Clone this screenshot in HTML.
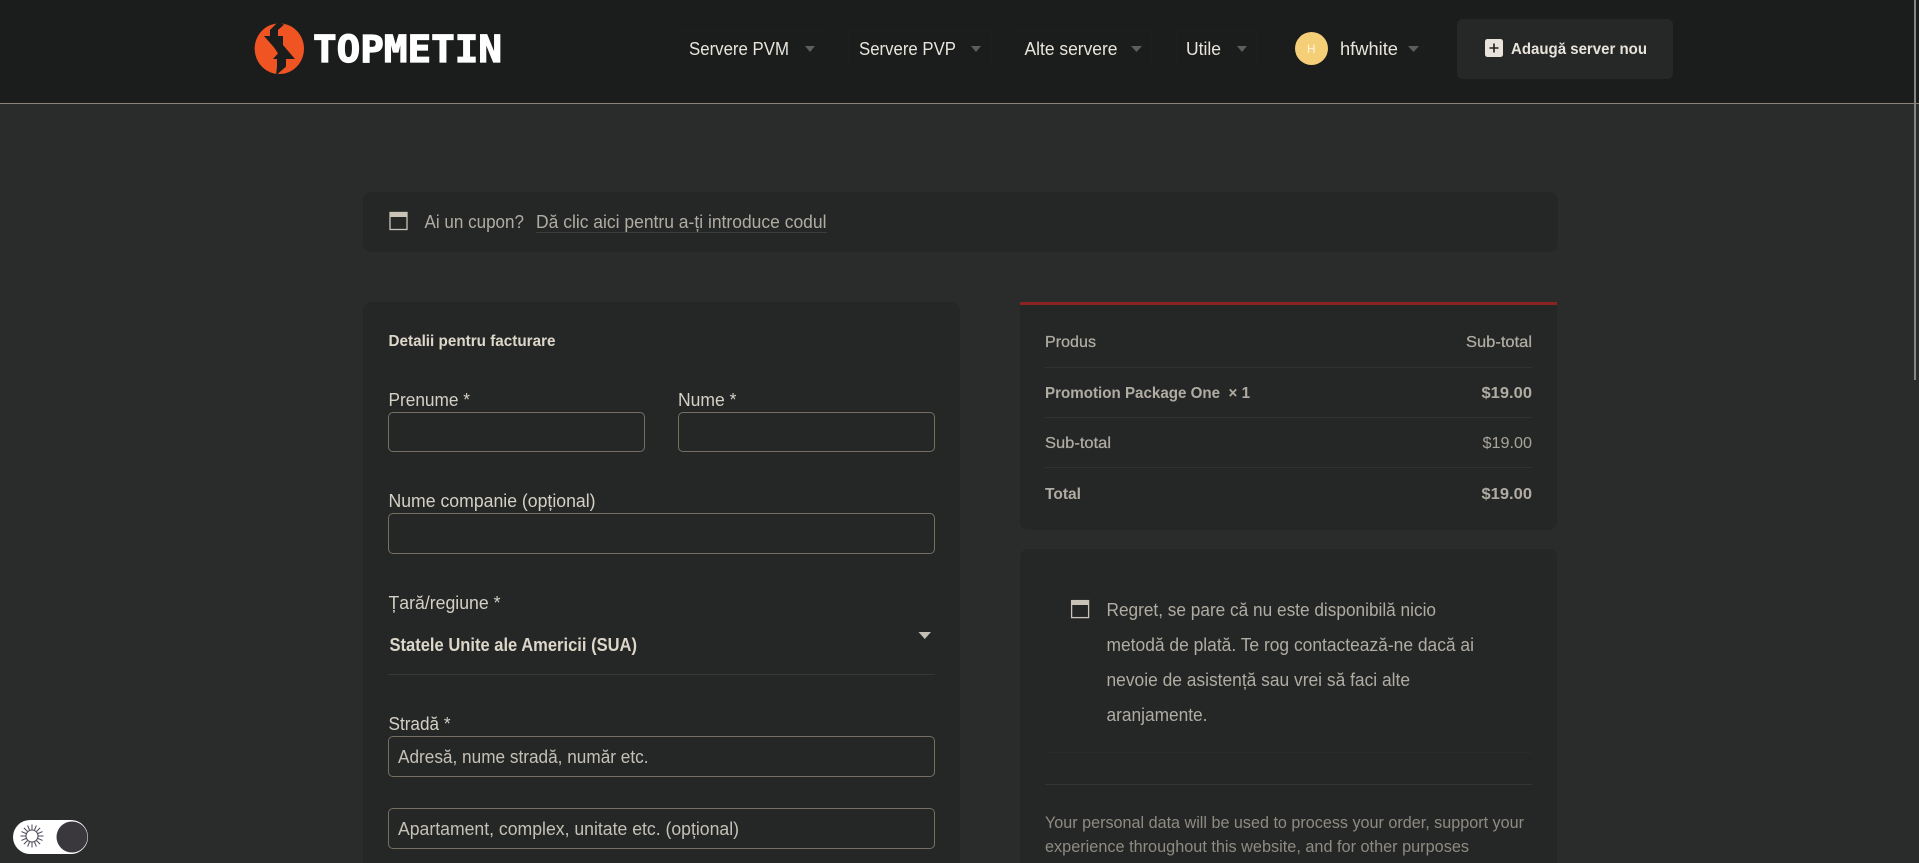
<!DOCTYPE html>
<html lang="ro">
<head>
<meta charset="utf-8">
<title>Finalizare comandă</title>
<style>
html,body{margin:0;padding:0;width:1919px;height:863px;overflow:hidden;background:#2a2c2b}
body{position:relative;font-family:"Liberation Sans",sans-serif}
.b{position:absolute;box-sizing:border-box}
.card{background:#252726;border-radius:8px}
.inp{border:1px solid #766f62;border-radius:5px;background:#252726}
.nv{border:1px solid #1d1f1e}
.ln{height:1px;background:#303230}
svg.full{position:absolute;left:0;top:0;width:1919px;height:863px}
text{font-family:"Liberation Sans",sans-serif;font-size:18px;white-space:pre}
.nav{fill:#e8e4dc;font-size:18px}
.lab{fill:#d5d0c5;font-size:18px}
.ph{fill:#c4c0b6;font-size:18px}
.mut{fill:#b0aca3;font-size:18px}
.m{fill:#b0aca3;font-size:16px;stroke:#b0aca3;stroke-width:.25px}
.bd{fill:#b0aca3;font-size:16px;font-weight:700}
.rg{fill:#a8a49b;font-size:16px}
.sm{fill:#8f8b82;font-size:16.5px}
</style>
</head>
<body>
<header class="b" style="left:0;top:0;width:1919px;height:104px;background:#1b1d1c;border-bottom:1px solid #8a8378"></header>
<div class="b nv" style="left:678px;top:31px;width:148px;height:36px"></div>
<div class="b nv" style="left:848px;top:31px;width:144px;height:36px"></div>
<div class="b nv" style="left:1013px;top:31px;width:139px;height:36px"></div>
<div class="b nv" style="left:1176px;top:31px;width:81px;height:36px"></div>
<div class="b" style="left:1457px;top:19px;width:216px;height:60px;background:#262827;border-radius:6px"></div>
<div class="b" style="left:1914px;top:0;width:2px;height:380px;background:#868686"></div>

<div class="b card" style="left:363px;top:192px;width:1195px;height:60px"></div>
<div class="b card" style="left:363px;top:302px;width:597px;height:580px"></div>
<div class="b" style="left:1020px;top:302px;width:537px;height:228px;background:#252726;border-top:3px solid #8c2323;border-radius:0 0 8px 8px"></div>
<div class="b card" style="left:1020px;top:549px;width:537px;height:330px"></div>

<div class="b inp" style="left:388px;top:412px;width:257px;height:40px"></div>
<div class="b inp" style="left:678px;top:412px;width:257px;height:40px"></div>
<div class="b inp" style="left:388px;top:513px;width:547px;height:41px"></div>
<div class="b ln" style="left:388px;top:674px;width:547px;background:#373836"></div>
<div class="b inp" style="left:388px;top:736px;width:547px;height:41px"></div>
<div class="b inp" style="left:388px;top:808px;width:547px;height:41px"></div>

<div class="b ln" style="left:1045px;top:367px;width:487px"></div>
<div class="b ln" style="left:1045px;top:417px;width:487px"></div>
<div class="b ln" style="left:1045px;top:467px;width:487px"></div>
<div class="b ln" style="left:1045px;top:752px;width:487px;background:#292a29"></div>
<div class="b ln" style="left:1045px;top:784px;width:487px;background:#343533"></div>
<div class="b" style="left:536px;top:232px;width:291px;height:1px;background:#3d3c39"></div>

<div class="b" style="left:13px;top:820px;width:75px;height:34px;background:#fff;border-radius:17px"></div>

<svg class="full" viewBox="0 0 1919 863" xmlns="http://www.w3.org/2000/svg">
  <!-- logo -->
  <g transform="translate(250 20) scale(.3333)">
    <ellipse cx="88" cy="86" rx="74" ry="76" fill="#f05423"/>
    <polygon fill="#1b1d1c" points="84,6 60,30 60,48 42,48 72,82 84,100 69,117 81,117 81,140 78,166 108,140 108,117 135,117 99,75 99,48 84,48 84,30 102,14"/>
  </g>
  <text x="313" y="62" textLength="189" lengthAdjust="spacingAndGlyphs" style="font-size:37px;font-weight:700;fill:#fff;font-family:'DejaVu Sans Mono','Liberation Mono',monospace;stroke:#fff;stroke-width:1.2px">TOPMETIN</text>

  <!-- nav -->
  <text class="nav" x="689" y="55" textLength="100" lengthAdjust="spacingAndGlyphs">Servere PVM</text>
  <polygon points="805,46 815,46 810,52" fill="#5d5d5d"/>
  <text class="nav" x="859" y="55" textLength="97" lengthAdjust="spacingAndGlyphs">Servere PVP</text>
  <polygon points="971,46 981,46 976,52" fill="#5d5d5d"/>
  <text class="nav" x="1024.5" y="55" textLength="93" lengthAdjust="spacingAndGlyphs">Alte servere</text>
  <polygon points="1131,46 1142,46 1136.5,52" fill="#5d5d5d"/>
  <text class="nav" x="1186" y="55" textLength="35" lengthAdjust="spacingAndGlyphs">Utile</text>
  <polygon points="1237,46 1247,46 1242,52" fill="#5d5d5d"/>
  <circle cx="1311.5" cy="48.5" r="16.5" fill="#f5cf78"/>
  <text x="1307" y="53" textLength="8.5" lengthAdjust="spacingAndGlyphs" style="font-size:12px;fill:#fff5dc">H</text>
  <text class="nav" x="1340" y="55" textLength="58" lengthAdjust="spacingAndGlyphs">hfwhite</text>
  <polygon points="1408,46 1419,46 1413.5,52" fill="#5d5d5d"/>

  <!-- add server -->
  <rect x="1485" y="39" width="18" height="18" rx="2.5" fill="#e8e4dc"/>
  <path d="M1494 43.5v9M1489.5 48h9" stroke="#1f201f" stroke-width="1.6" fill="none"/>
  <text x="1511" y="54" textLength="136" lengthAdjust="spacingAndGlyphs" style="font-size:15.5px;font-weight:700;fill:#e8e4dc">Adaugă server nou</text>

  <!-- coupon -->
  <rect x="390" y="212.5" width="17" height="17" fill="none" stroke="#c9c3b8" stroke-width="1.3"/>
  <rect x="390" y="212" width="17.500" height="5" fill="#c9c3b8"/>
  <text class="mut" x="424.500" y="228" textLength="99.500" lengthAdjust="spacingAndGlyphs">Ai un cupon?</text>
  <text class="mut" x="536" y="228" textLength="290.500" lengthAdjust="spacingAndGlyphs">Dă clic aici pentru a-ți introduce codul</text>

  <!-- billing -->
  <text x="388.500" y="346" textLength="167" lengthAdjust="spacingAndGlyphs" style="font-size:16px;font-weight:700;fill:#ddd7ca">Detalii pentru facturare</text>
  <text class="lab" x="388.500" y="406" textLength="81.500" lengthAdjust="spacingAndGlyphs">Prenume *</text>
  <text class="lab" x="678" y="406" textLength="58.500" lengthAdjust="spacingAndGlyphs">Nume *</text>
  <text class="lab" x="388.500" y="507" textLength="207" lengthAdjust="spacingAndGlyphs">Nume companie (opțional)</text>
  <text class="lab" x="388.500" y="609" textLength="112" lengthAdjust="spacingAndGlyphs">Țară/regiune *</text>
  <text x="389.500" y="651" textLength="247.500" lengthAdjust="spacingAndGlyphs" style="font-size:18px;font-weight:700;fill:#ddd7ca">Statele Unite ale Americii (SUA)</text>
  <polygon points="918.500,632 931,632 924.800,639" fill="#c5c0b5"/>
  <text class="lab" x="388.500" y="730" textLength="62" lengthAdjust="spacingAndGlyphs">Stradă *</text>
  <text class="ph" x="398" y="763" textLength="250.500" lengthAdjust="spacingAndGlyphs">Adresă, nume stradă, număr etc.</text>
  <text class="ph" x="398" y="835" textLength="341" lengthAdjust="spacingAndGlyphs">Apartament, complex, unitate etc. (opțional)</text>

  <!-- order -->
  <text class="m" x="1045" y="347" textLength="51" lengthAdjust="spacingAndGlyphs">Produs</text>
  <text class="m" x="1466" y="347" textLength="66" lengthAdjust="spacingAndGlyphs">Sub-total</text>
  <text class="bd" x="1045" y="398" textLength="205" lengthAdjust="spacingAndGlyphs">Promotion Package One  × 1</text>
  <text class="bd" x="1481.500" y="398" textLength="50.500" lengthAdjust="spacingAndGlyphs">$19.00</text>
  <text class="m" x="1045" y="448" textLength="66" lengthAdjust="spacingAndGlyphs">Sub-total</text>
  <text class="rg" x="1482.500" y="448" textLength="49.500" lengthAdjust="spacingAndGlyphs">$19.00</text>
  <text class="bd" x="1045" y="499" textLength="36" lengthAdjust="spacingAndGlyphs">Total</text>
  <text class="bd" x="1481.500" y="499" textLength="50.500" lengthAdjust="spacingAndGlyphs">$19.00</text>

  <!-- notice -->
  <rect x="1071.600" y="600.600" width="17" height="17" fill="none" stroke="#c9c3b8" stroke-width="1.3"/>
  <rect x="1071" y="600" width="18" height="5" fill="#c9c3b8"/>
  <text class="mut" x="1106.500" y="616" textLength="329.500" lengthAdjust="spacingAndGlyphs">Regret, se pare că nu este disponibilă nicio</text>
  <text class="mut" x="1106.500" y="651" textLength="367.500" lengthAdjust="spacingAndGlyphs">metodă de plată. Te rog contactează-ne dacă ai</text>
  <text class="mut" x="1106.500" y="686" textLength="303.500" lengthAdjust="spacingAndGlyphs">nevoie de asistență sau vrei să faci alte</text>
  <text class="mut" x="1106.500" y="721" textLength="101" lengthAdjust="spacingAndGlyphs">aranjamente.</text>
  <text class="sm" x="1045" y="828" textLength="479" lengthAdjust="spacingAndGlyphs">Your personal data will be used to process your order, support your</text>
  <text class="sm" x="1045" y="852" textLength="424" lengthAdjust="spacingAndGlyphs">experience throughout this website, and for other purposes</text>

  <!-- toggle -->
  <circle cx="72" cy="837" r="15.500" fill="#3a373d"/>
  <circle cx="32" cy="836" r="6" fill="none" stroke="#4a4d58" stroke-width="1.1"/>
  <g stroke="#4a4d58" stroke-width="1">
    <path d="M32 824.500v5M32 842.500v5M20.500 836h5M38.500 836h5M23.900 827.900l3.500 3.500M36.600 840.600l3.500 3.500M23.900 844.100l3.500-3.500M36.600 831.400l3.500-3.500M27.600 825.400l1.900 4.600M34.500 842l1.900 4.600M21.400 831.600l4.600 1.900M38 838.500l4.600 1.900M21.400 840.400l4.600-1.900M38 833.500l4.600-1.900M27.600 846.600l1.900-4.600M34.500 830l1.900-4.600"/>
  </g>
</svg>
</body>
</html>
